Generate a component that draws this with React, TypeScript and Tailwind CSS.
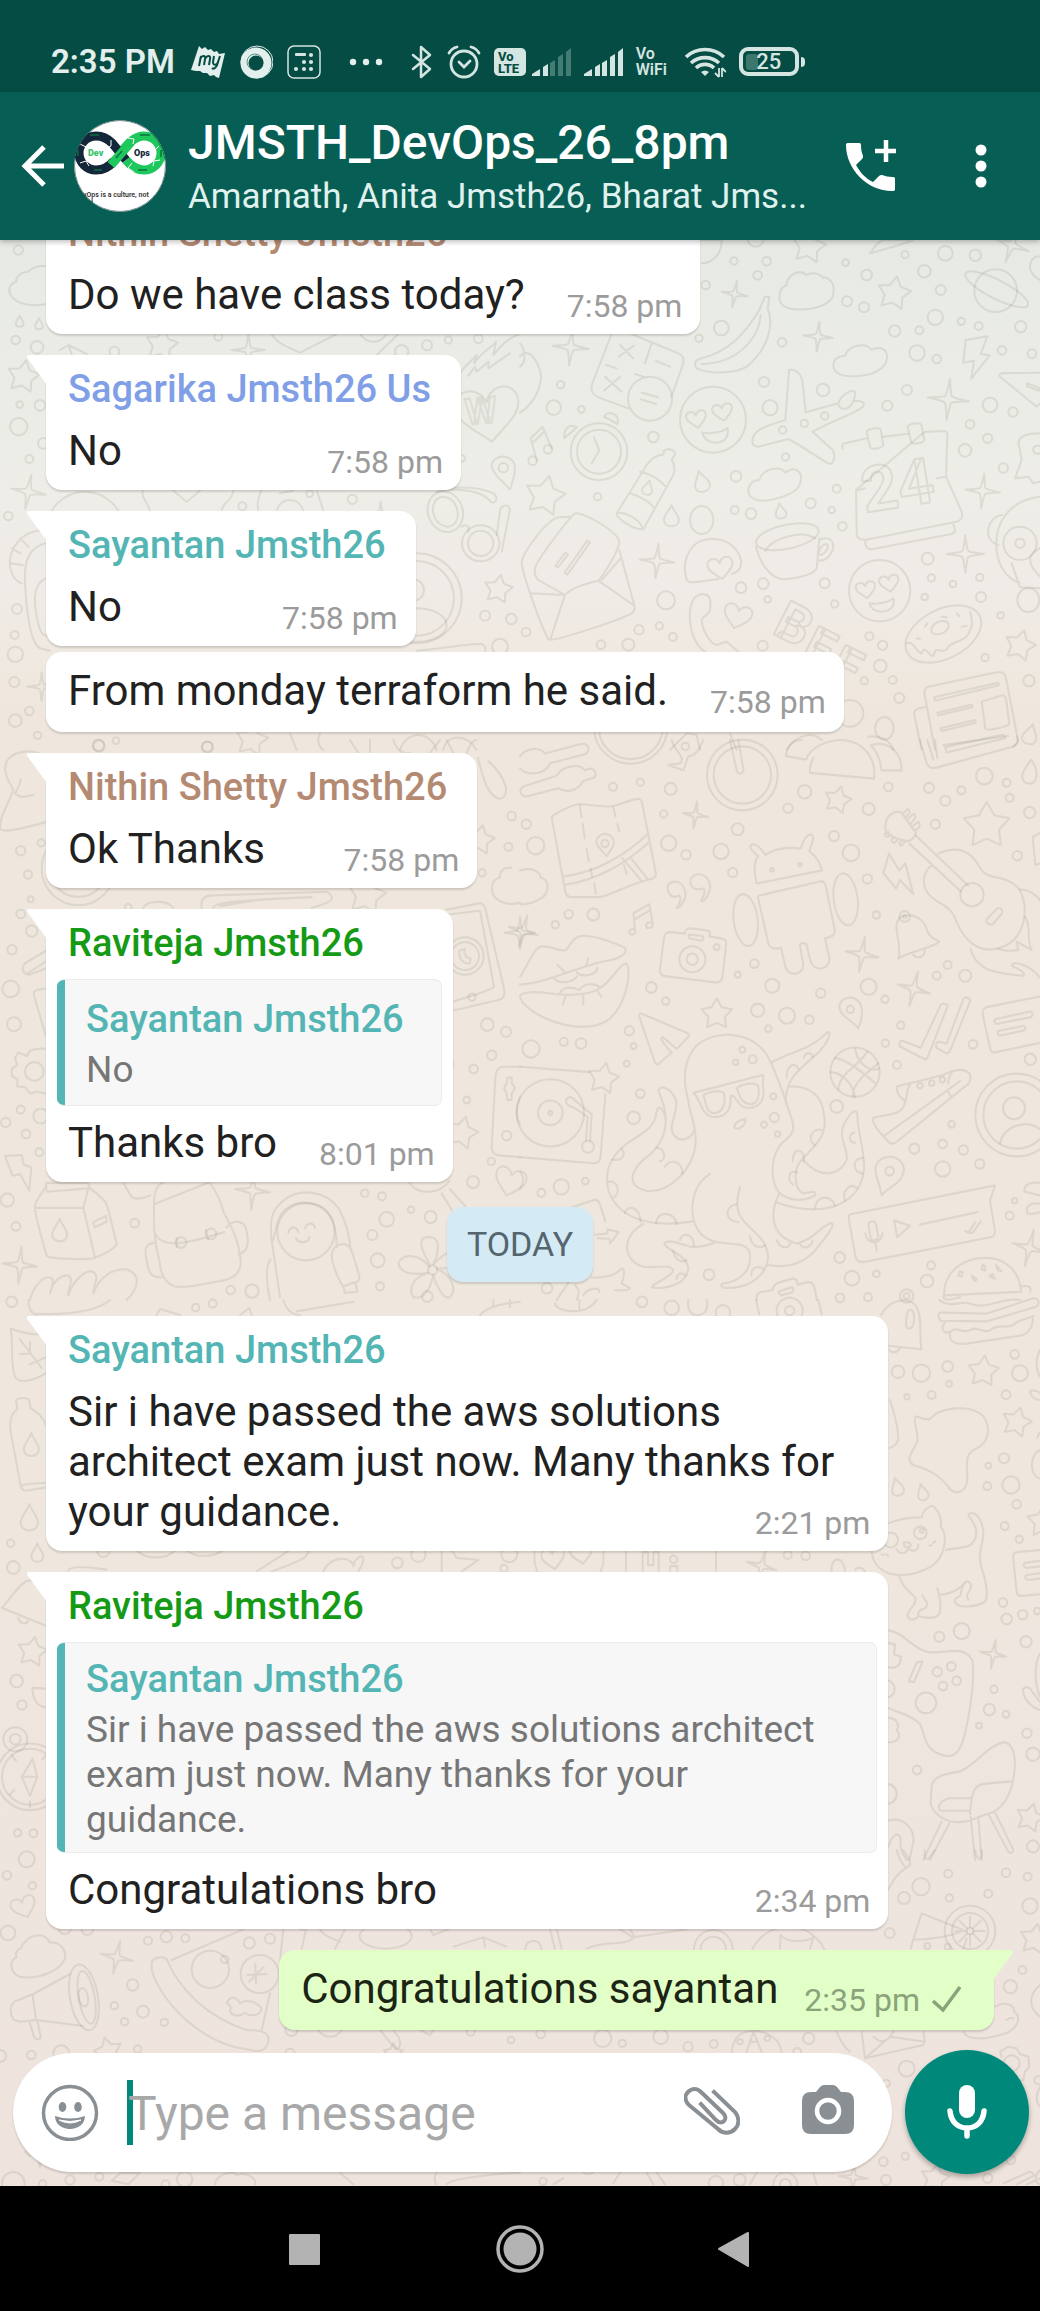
import React from "react";

/* ------------------------------------------------------------------ */
/* Wallpaper                                                           */
/* ------------------------------------------------------------------ */

type Dot = [number, number, number];
type Spin = [number, number, number, number?];

interface Patch {
  x: number;
  y: number;
  tall?: boolean;
  dots: Dot[];
  stars?: Spin[];
  sparks?: Spin[];
  hearts?: Spin[];
  drops?: Spin[];
  ovals?: [number, number, number, number, number?][];
  letters?: [string, number, number, number, number][];
  lines: string[];
}

function starPath(r: number) {
  const pts: string[] = [];
  for (let i = 0; i < 10; i++) {
    const a = (Math.PI / 5) * i - Math.PI / 2;
    const q = i % 2 === 0 ? r : r * 0.54;
    pts.push(`${(q * Math.cos(a)).toFixed(1)} ${(q * Math.sin(a)).toFixed(1)}`);
  }
  return `M${pts.join("L")}Z`;
}

function sparkPath(r: number) {
  const k = r * 0.16;
  return `M0 ${-r}Q${k * 0.6} ${-k * 1.4} ${k} ${-k}Q${k * 1.4} ${-k * 0.6} ${r} 0Q${k * 1.4} ${k * 0.6} ${k} ${k}Q${k * 0.6} ${k * 1.4} 0 ${r}Q${-k * 0.6} ${k * 1.4} ${-k} ${k}Q${-k * 1.4} ${k * 0.6} ${-r} 0Q${-k * 1.4} ${-k * 0.6} ${-k} ${-k}Q${-k * 0.6} ${-k * 1.4} 0 ${-r}Z`;
}

function heartPath(r: number) {
  return `M0 ${r * 0.85}C${-r * 0.5} ${r * 0.4} ${-r} ${r * 0.1} ${-r} ${-r * 0.35}C${-r} ${-r * 0.95} ${-r * 0.2} ${-r} 0 ${-r * 0.4}C${r * 0.2} ${-r} ${r} ${-r * 0.95} ${r} ${-r * 0.35}C${r} ${r * 0.1} ${r * 0.5} ${r * 0.4} 0 ${r * 0.85}Z`;
}

function dropPath(r: number) {
  return `M0 ${-r * 1.4}C${r * 0.3} ${-r * 0.6} ${r * 0.9} ${-r * 0.2} ${r * 0.9} ${r * 0.4}C${r * 0.9} ${r * 1.4} ${-r * 0.9} ${r * 1.4} ${-r * 0.9} ${r * 0.4}C${-r * 0.9} ${-r * 0.2} ${-r * 0.3} ${-r * 0.6} 0 ${-r * 1.4}Z`;
}

const patches: Patch[] = [
  {
    x: 520,
    y: 230,
    dots: [
      [642, 93, 11], [740, 94, 13], [713, 136, 13], [977, 98, 10], [1155, 74, 11], [1276, 70, 22], [1366, 76, 17],
      [1040, 135, 16], [1213, 124, 19], [1262, 180, 15], [981, 214, 15], [1032, 232, 15], [1246, 262, 23], [604, 294, 22],
      [786, 337, 13], [1124, 303, 17], [1198, 301, 12], [1324, 274, 11], [1376, 288, 12], [1502, 290, 17], [1191, 369, 23],
      [1250, 387, 13], [1446, 361, 13], [1536, 371, 13], [537, 325, 11], [557, 165, 13], [122, 464, 11], [101, 533, 22],
      [184, 538, 10], [732, 456, 15], [909, 480, 19], [750, 533, 23], [1161, 480, 15], [1102, 527, 15], [1410, 525, 22],
      [1479, 546, 14], [1350, 583, 13], [1403, 625, 14], [1335, 661, 19], [400, 621, 16], [797, 681, 11], [648, 739, 16],
      [950, 776, 12], [872, 820, 15], [935, 840, 10], [644, 840, 12], [693, 851, 16], [967, 889, 13], [1450, 714, 14],
      [233, 800, 11], [1223, 986, 18], [1234, 1044, 11], [1299, 1062, 10], [1379, 1042, 11], [1383, 1101, 15],
      [1214, 1101, 10], [663, 1073, 16], [730, 1061, 16], [914, 1060, 15], [743, 1108, 10], [944, 1122, 11],
      [438, 1111, 27], [357, 1199, 14], [418, 1188, 11], [459, 1221, 12], [325, 1244, 18], [243, 1244, 13], [18, 1206, 13],
      [728, 1247, 15], [1048, 1219, 12], [1088, 1246, 14], [1081, 1308, 19], [1118, 1350, 12], [1033, 1352, 11],
      [1442, 1156, 10], [1395, 1283, 11], [1138, 1404, 15], [1527, 1352, 17], [788, 600, 11], [853, 580, 11],
      [914, 558, 11], [390, 506, 66], [579, 569, 99], [1079, 1082, 92], [237, 665, 85], [237, 665, 66], [38, 692, 13],
      [84, 658, 13], [1500, 940, 50], [1500, 940, 14], [707, 26, 24], [1427, 182, 64],
    ],
    stars: [[867, 50, 52, 10], [1122, 190, 52, 10], [75, 798, 62, 12], [1500, 1247, 48, 15]],
    sparks: [[644, 192, 40, 10], [152, 352, 55, 5], [894, 320, 45, 5], [1285, 508, 62, 5], [1388, 783, 52, 5], [411, 993, 52, 5], [1336, 972, 56, 0], [1475, 45, 55, 20]],
    hearts: [[530, 568, 30, -10], [608, 547, 30, -10], [1038, 1080, 29, -10], [1108, 1061, 29, -10], [652, 1160, 42, 15], [602, 1015, 38, -10]],
    drops: [[545, 757, 25, -15], [454, 860, 25], [782, 845, 18, -10], [383, 775, 17, 15], [1530, 1515, 24, 15]],
    ovals: [[1430, 178, 105, 28, 27], [545, 870, 35, 42], [802, 920, 96, 36, -12], [1525, 1110, 33, 36], [1270, 1212, 122, 74, -27], [1260, 1193, 28, 18, -25], [1093, 1495, 28, 34], [990, 1450, 40, 40]],
    letters: [["24", 1035, 848, 190, -9], ["B", 752, 1208, 160, 27], ["F", 840, 1278, 150, 27], ["F", 920, 1335, 150, 27]],
    lines: [
      "M800 165C800 135 840 115 858 135C880 125 900 130 908 143C930 140 945 165 940 185C945 215 900 235 855 238C810 242 775 230 778 200C780 180 785 172 800 165Z",
      "M975 378C985 345 1035 335 1055 360C1080 345 1105 360 1101 385C1098 415 1060 435 1015 438C965 442 940 430 940 405C942 385 958 378 975 378Z",
      "M718 750C728 715 780 705 797 728C822 705 850 725 842 755C838 785 800 800 750 810C705 818 680 800 686 775C690 758 702 750 718 750Z",
      "M735 200L748 200L743 235C765 290 740 360 680 410C640 435 560 430 530 415C520 400 525 390 545 385C620 365 670 320 718 240ZM722 255C715 330 650 400 545 402",
      "M1337 330L1402 319L1382 372L1409 376L1354 446L1362 392L1330 398Z",
      "M1560 428L1445 430C1436 432 1438 438 1442 442L1550 530L1560 520M1522 460L1560 475L1556 482L1520 468Z",
      "M275 312L215 465C212 485 218 495 235 502L325 535M455 498L490 400C492 385 490 378 475 370L335 312M300 345L340 385M342 347L296 380M408 393L450 410M255 440L305 485M300 440L252 482M258 405L290 415M345 432L370 440M395 340L375 400M366 488L414 502M362 508L408 522",
      "M807 420C825 415 845 430 848 460L857 547L955 520C965 490 1000 475 1005 485C1008 495 1000 510 1000 514C1025 510 1035 518 1030 528C1020 545 940 570 878 605L938 660C948 680 940 700 930 702C910 695 850 650 805 627L715 650C695 650 695 635 700 620C710 595 750 585 796 570ZM955 520C955 545 990 540 1000 514",
      "M547 607C570 615 610 605 622 594C630 620 610 638 588 638C565 638 550 625 547 607ZM1048 1120C1070 1125 1110 1115 1120 1105C1128 1130 1105 1145 1085 1145C1065 1145 1052 1135 1048 1120Z",
      "M968 655C965 645 968 641 975 640L1040 625M1088 620L1163 612M1213 606L1272 603C1280 603 1282 608 1282 615L1278 740L1325 845C1330 860 1325 870 1310 875L1035 930C1020 930 1010 925 1010 910L1008 780ZM1008 782L1035 775M1250 745L1278 740M1035 930C1035 950 1040 958 1055 958L1295 912C1308 908 1308 900 1298 878",
      "M1040 605C1042 597 1078 590 1082 598L1090 645C1086 655 1056 660 1050 652ZM1163 590C1166 580 1200 576 1204 584L1213 630C1210 640 1180 644 1174 638Z",
      "M222 622L238 662L215 700M133 625C130 595 150 580 170 592ZM252 560C265 540 300 550 293 582Z",
      "M50 690L32 625L68 590L95 655M36 640L72 606",
      "M370 898L460 735C468 715 462 700 455 688L466 672C460 655 440 655 432 662L430 674C405 675 390 690 380 705L290 850C285 862 340 900 370 898ZM360 725C390 730 420 750 435 768M328 790C355 797 390 815 403 835M290 850C320 845 360 870 370 898",
      "M500 1050C480 980 520 925 575 927C640 925 670 980 662 1010C655 1030 640 1028 635 1032M500 1050C505 1062 530 1055 595 1047",
      "M708 950C720 1000 750 1045 790 1048C830 1045 880 1035 890 1015L898 925M898 930C930 915 945 935 938 960C925 990 905 995 893 990M900 955C915 935 928 940 922 958C912 975 900 978 896 970ZM735 963C760 920 850 900 885 925",
      "M1447 855C1400 860 1385 930 1435 945M1560 800C1470 810 1420 880 1430 960C1435 1010 1460 1045 1498 1058M1475 1000L1500 1072L1560 1075M1560 955C1520 970 1520 1000 1560 1040",
      "M5 1000C5 970 80 870 115 862L148 860M45 1015C50 990 150 860 165 850C185 845 290 900 298 935C298 960 250 1035 235 1052C200 1060 150 1075 135 1095L55 1050C45 1040 42 1030 45 1015ZM5 1000C10 1040 60 1180 85 1228C95 1238 300 1170 335 1150C348 1140 345 1130 340 1115L298 960M30 1090L135 1095L92 1225M235 1052L340 1125M245 1050L302 985",
      "M106 1008L136 968L144 974L114 1012ZM134 1028L202 932L210 938L142 1034Z",
      "M510 1170C505 1110 530 1085 560 1095C575 1100 572 1125 570 1140C565 1160 545 1155 545 1175C550 1205 570 1240 590 1245L620 1235L655 1265M510 1170C512 1210 530 1250 555 1265",
      "M1160 1240C1180 1230 1190 1270 1205 1270C1215 1240 1225 1280 1240 1278C1250 1240 1260 1275 1280 1258C1290 1230 1340 1240 1350 1200C1360 1190 1355 1160 1350 1145M1215 1190L1222 1180M1190 1225L1200 1227M1265 1160L1280 1162M1310 1150L1318 1158M1325 1190L1340 1188",
      "M1215 1400C1210 1380 1215 1375 1225 1370L1430 1327C1450 1325 1455 1330 1458 1345L1492 1520C1495 1535 1490 1540 1480 1550M1215 1400L1245 1560M1215 1432C1190 1435 1180 1440 1183 1455L1205 1560M1385 1415L1445 1396C1452 1396 1456 1400 1458 1408L1468 1480C1468 1490 1400 1505 1396 1495ZM1242 1402L1435 1358L1437 1366L1245 1412ZM1252 1448L1355 1424L1357 1432L1255 1456ZM1262 1495L1365 1470L1367 1478L1265 1503ZM1270 1545L1465 1518",
      "M0 380C30 340 70 420 62 450C58 490 30 530 0 548M0 340C15 355 20 400 0 410M545 30L605 30C605 75 575 100 545 100M1050 70C1070 40 1080 32 1090 30L1180 30C1130 50 1080 60 1050 70Z",
      "M1560 610C1500 610 1490 630 1498 650L1505 690L1485 745L1525 740L1540 760L1560 755M1560 648C1530 640 1535 680 1560 670",
      "M800 1560C830 1510 880 1505 905 1530M1045 1520C1080 1515 1110 1530 1120 1560M630 1510L650 1560M450 1560L500 1510L530 1515L540 1560",
      "M1560 80C1525 75 1515 130 1560 150",
    ],
  },
  {
    x: 0,
    y: 230,
    dots: [
      [55, 60, 14], [47, 330, 13], [111, 352, 19], [59, 524, 10], [120, 526, 16], [56, 590, 26], [88, 687, 12], [25, 858, 13],
      [51, 1137, 15], [44, 1215, 12], [46, 1273, 23], [43, 1356, 15], [88, 1443, 13], [46, 1472, 19], [113, 1516, 11],
      [343, 365, 15], [1057, 808, 14], [929, 791, 10], [727, 829, 12], [1281, 346, 15], [1345, 330, 11], [1435, 326, 13],
      [1455, 1157, 15], [1534, 1167, 16], [1500, 1250, 24], [1385, 685, 10], [655, 320, 12], [622, 1550, 15],
      [297, 1548, 17], [348, 1532, 10], [1510, 713, 14], [1250, 1105, 135], [1250, 1105, 112], [1240, 1080, 32],
      [870, 850, 40], [1120, 290, 45], [1205, 365, 20], [255, 900, 115], [130, 640, 16],
    ],
    stars: [[70, 440, 50, 10], [485, 345, 50, 10], [1495, 1078, 44, 10], [755, 1530, 50, 10]],
    sparks: [[85, 785, 52, 10], [745, 360, 50], [125, 1370, 42], [1142, 850, 35]],
    hearts: [[1465, 555, 95, -8], [560, 765, 60]],
    drops: [[59, 275, 13], [117, 283, 13]],
    ovals: [[1336, 845, 52, 62, -20], [1336, 845, 36, 46, -20], [1442, 940, 56, 54], [1442, 940, 38, 38], [1250, 1185, 90, 50]],
    letters: [["W", 1398, 585, 110, -5]],
    lines: [
      "M138 108C100 105 90 120 85 125C55 125 45 150 50 155C25 160 25 185 32 195C50 225 100 230 138 222",
      "M1530 778C1510 755 1475 730 1475 705C1480 670 1545 670 1545 715C1545 740 1535 760 1530 778Z",
      "M1385 890C1400 880 1410 890 1405 905M1310 785C1380 770 1450 785 1472 815C1490 825 1495 800 1480 790C1440 770 1380 770 1330 776M1505 965L1530 838C1525 820 1500 825 1500 845L1490 915",
      "M138 900C60 900 25 960 30 1010C35 1040 50 1055 65 1060M138 940C90 950 70 990 75 1060M75 1060C80 1150 90 1240 120 1255L150 1262M138 1045C100 1060 100 1110 110 1160C118 1200 125 1215 140 1218M35 955L62 970M60 925L85 950M30 1000L68 1005",
      "M815 312C830 340 860 350 900 368L1010 312M1195 312L1130 375M180 360L205 345L260 372M205 345L215 372M1380 430C1400 400 1425 385 1430 375L1422 400C1450 360 1485 345 1488 335L1480 375C1510 340 1530 320 1560 312M1405 437L1425 410L1430 425L1465 395L1465 415L1530 370",
      "M430 780C420 800 440 810 450 842M700 780C695 820 670 810 665 842M775 842C770 820 775 800 785 780M950 780L970 842M840 790L880 782",
      "M1250 1262C1300 1260 1400 1240 1445 1242C1455 1245 1458 1255 1455 1265M870 1510L890 1560M960 1510C950 1530 955 1550 970 1560M1200 1560C1220 1500 1290 1500 1310 1560M1330 1560C1340 1510 1400 1510 1430 1560",
    ],
  },
  {
    x: 520,
    y: 740,
    tall: true,
    dots: [
      [279, 131, 12], [361, 118, 11], [452, 137, 18], [431, 207, 11], [804, 191, 14], [854, 145, 20], [1046, 193, 18],
      [1105, 131, 13], [1227, 134, 15], [1276, 170, 15], [1324, 141, 12], [1393, 101, 25], [1460, 120, 12], [1469, 162, 12],
      [1529, 203, 17], [19, 236, 14], [47, 296, 26], [446, 289, 23], [498, 321, 14], [603, 312, 23], [653, 250, 18],
      [638, 371, 14], [942, 269, 15], [993, 316, 25], [1042, 389, 14], [1246, 236, 14], [1492, 324, 14], [146, 488, 13],
      [106, 517, 11], [220, 489, 18], [1069, 490, 11], [703, 626, 13], [653, 657, 9], [757, 688, 21], [902, 709, 14],
      [1046, 691, 24], [1095, 726, 11], [1283, 630, 12], [1250, 660, 12], [1336, 660, 18], [394, 693, 16], [437, 731, 11],
      [713, 757, 20], [801, 772, 24], [868, 783, 13], [745, 808, 10], [1142, 799, 11], [1096, 849, 11], [1359, 852, 13],
      [1531, 894, 17], [1131, 910, 12], [328, 814, 14], [341, 857, 9], [131, 845, 12], [183, 850, 16], [33, 865, 26],
      [320, 906, 9], [361, 990, 13], [341, 1058, 19], [950, 1026, 19], [1295, 1076, 10], [1183, 1144, 15],
      [1268, 1131, 13], [1330, 1148, 14], [1379, 1187, 14], [1268, 1201, 23], [124, 1251, 23], [196, 1235, 10],
      [64, 1268, 12], [1484, 1290, 8], [1469, 1332, 12], [959, 1449, 16], [996, 1507, 22], [1069, 1495, 10],
      [1233, 1471, 12], [1221, 1515, 19], [567, 1497, 16], [81, 1535, 16], [1160, 1557, 20], [1160, 1557, 9],
      [960, 1562, 13], [1044, 1560, 12], [255, 290, 11], [590, 580, 9], [517, 614, 39], [517, 614, 17], [1356, 433, 35],
      [667, 867, 9], [698, 894, 12], [647, 902, 8], [760, 998, 9], [763, 1057, 14], [732, 1077, 9], [773, 1103, 8],
      [1482, 1031, 33], [91, 1044, 37], [91, 1044, 6], [91, 1044, 101], [204, 1139, 18], [1005, 930, 74], [991, 754, 11],
      [1109, 1207, 13], [1200, 968, 8], [1235, 961, 8], [1267, 951, 8], [667, 98, 106], [667, 98, 86], [332, -36, 110],
      [332, -36, 96], [756, 363, 5], [840, 349, 5], [1154, 494, 16], [1154, 494, 5], [496, 18, 11],
    ],
    stars: [[953, 168, 42, 15], [1400, 240, 72], [590, 768, 48, 0], [250, 948, 48, 10]],
    sparks: [[526, 210, 38, 8], [10, 535, 45, 15], [1026, 600, 50, 10], [1181, 697, 50, 15], [1528, 1422, 52, 15]],
    ovals: [[1490, 1050, 124, 116], [1490, 1050, 100, 94], [677, 504, 36, 73, -8], [977, 446, 36, 73, -8]],
    lines: [
      "M0 45C20 20 60 20 75 38L180 12C205 5 215 30 195 40L90 65C75 100 20 100 0 80M10 130L110 100C130 70 180 65 195 85C220 70 235 95 222 105L190 115C170 150 130 145 115 135L20 158C0 158 -5 140 10 130Z",
      "M95 218C95 208 160 180 178 180C210 180 260 190 280 185C300 180 340 165 355 165C362 165 365 170 367 180L408 375C408 385 400 388 390 390C340 400 280 430 240 440L155 440C145 440 138 435 136 425ZM133 382C230 370 320 320 383 263M138 405C230 392 320 345 388 285M306 330L365 395M330 328L382 388",
      "M180 182L184 215M188 235L194 275M200 305L206 340M212 360L216 382M222 400L228 430M280 188L286 215M292 235L298 255M312 350L320 375",
      "M260 325C240 305 229 295 229 285C232 255 280 255 282 288C282 300 270 310 260 325Z",
      "M630 0L650 85C655 100 672 95 670 80L655 0M455 0C462 30 500 50 480 65L445 70L490 85L505 45C530 45 540 20 550 0",
      "M798 45C800 15 820 0 845 0M798 45L858 55C870 20 920 0 970 0C1030 5 1070 50 1062 108L870 92C868 80 872 65 880 50M1052 15C1100 0 1145 30 1145 85L1085 85C1080 50 1070 30 1052 15Z",
      "M1200 0L1220 65C1225 80 1240 80 1255 76L1480 18C1495 12 1498 0 1490 -10M1222 0L1240 55M1245 0L1252 50M1275 20L1450 -15L1455 -5L1280 35Z",
      "M1533 55C1560 90 1550 120 1530 122C1510 122 1500 105 1512 85Z",
      "M1097 235C1100 205 1140 190 1150 210L1188 260C1185 275 1165 290 1150 280C1120 275 1090 265 1097 235ZM1150 205L1160 195C1168 192 1172 200 1166 206L1160 214M1165 220L1178 208C1186 206 1190 214 1184 220L1174 232M1180 240L1192 230C1200 230 1202 240 1196 246L1186 252M1106 258L1094 262C1092 268 1098 272 1104 270L1114 266M1124 272L1114 280C1114 288 1122 290 1128 284L1134 278M1145 282L1138 290C1140 298 1150 296 1154 284",
      "M1188 268L1345 408M1168 290L1322 424M1255 318C1310 295 1350 310 1375 350C1400 400 1450 370 1495 415C1530 460 1520 560 1440 582C1380 600 1335 565 1310 510C1290 450 1240 465 1215 415C1205 385 1220 360 1235 352M1402 500L1432 472C1445 468 1450 480 1444 488L1418 516C1405 520 1395 510 1402 500Z",
      "M1500 418C1530 420 1550 435 1560 450M1515 495C1535 520 1518 560 1535 588L1490 565L1495 588C1470 592 1450 590 1435 585M1352 585C1370 650 1440 655 1510 660C1520 650 1490 640 1475 632C1480 615 1530 630 1560 665",
      "M1107 318L1138 365L1156 345L1180 432L1140 392L1128 416L1090 372Z",
      "M710 402C698 360 705 335 715 325C695 310 685 300 695 292C710 290 725 305 736 322C770 300 810 300 842 304C850 280 862 262 875 265C888 272 872 295 868 312C890 325 900 345 906 365ZM716 436L900 396C912 394 915 400 917 408L944 530C946 545 940 550 915 555L928 610C932 645 880 650 872 620L860 575C860 565 840 568 840 575L850 630C850 660 800 665 795 630L783 582C760 588 750 582 745 570L715 445C714 440 712 438 716 436Z",
      "M470 470C490 440 480 430 465 440C440 435 435 405 455 398C490 390 510 430 485 460C480 468 475 472 470 470ZM543 450C560 425 555 410 540 418C510 420 500 390 525 378C560 368 585 405 560 440C555 448 548 452 543 450Z",
      "M345 530L340 485L388 460L398 515M344 502L390 477M345 530C350 545 330 550 328 540C328 530 338 528 345 530ZM398 515C400 528 380 530 378 520C380 510 392 508 398 515Z",
      "M432 555C436 540 440 538 452 538L495 542C496 530 500 527 510 527L560 533C570 535 572 540 568 550L605 556C618 558 620 564 618 575L608 660C605 678 595 680 580 678L440 662C420 660 418 650 420 640ZM508 545L545 548C555 555 550 562 542 562L510 556C504 552 504 548 508 545Z",
      "M1135 612C1150 570 1110 520 1142 495C1190 480 1215 510 1222 535C1228 550 1240 555 1258 565C1230 585 1170 590 1135 612ZM1180 600C1190 615 1215 608 1214 590",
      "M0 662C20 640 40 580 65 578C90 575 120 595 138 588C150 575 160 548 190 548C230 548 290 570 315 582C325 600 290 615 260 618C170 635 80 680 0 685M0 720C0 705 40 705 70 707C120 715 200 720 240 695C280 670 300 625 318 625C335 640 325 730 270 780C200 830 60 790 8 735ZM112 630L135 650M205 612L198 635M102 665C110 685 160 680 170 662M170 650C180 665 230 660 232 638M120 710C125 690 160 690 178 700C190 680 225 680 240 692M138 715L128 740M190 715L190 740M230 700L244 718",
      "M362 765L500 820C508 824 508 828 504 832L470 865L428 832C420 835 425 845 455 875L415 908C408 910 405 905 402 895L358 775C358 768 360 765 362 765Z",
      "M1015 808C1000 785 958 775 958 745C965 710 1020 715 1025 750C1030 775 1020 790 1015 808ZM1085 1275C1080 1245 1065 1220 1066 1200C1072 1155 1150 1155 1152 1205C1145 1245 1105 1250 1085 1275Z",
      "M1148 842L1202 862L1262 742C1270 735 1285 740 1282 748L1222 890C1218 896 1215 896 1210 892L1140 858C1135 850 1142 840 1148 842ZM1258 845L1280 850L1330 725C1335 718 1352 722 1350 732L1290 870C1286 878 1280 878 1274 875L1250 862C1245 852 1250 845 1258 845Z",
      "M1560 718L1400 748C1388 752 1386 758 1388 768L1410 862C1412 874 1418 876 1428 874L1560 848M1425 782L1530 760C1540 762 1540 772 1532 776L1430 795C1422 792 1422 785 1425 782ZM1435 815L1510 800C1518 802 1518 810 1512 813L1440 828C1432 826 1432 820 1435 815Z",
      "M0 915L210 930M256 992L242 1165C240 1180 235 1186 220 1185L0 1168M138 1008C145 995 160 1000 165 1010L215 1048L210 1122M138 1012C140 1025 150 1025 160 1028L203 1055L198 1122",
      "M505 1010C490 960 485 900 530 855C590 810 690 815 740 880C780 950 800 1020 818 1070C825 1100 810 1110 790 1125C750 1160 750 1230 775 1265C800 1290 850 1295 885 1275C890 1265 880 1262 850 1270C820 1255 820 1200 845 1175C880 1140 925 1110 912 1050C905 985 860 968 803 970M752 905C800 875 870 870 920 820C935 810 930 840 900 870C860 910 790 940 798 1020M505 1010C510 1050 530 1080 527 1130C520 1200 450 1270 380 1262C320 1250 330 1210 370 1175C410 1150 440 1110 437 1060C430 1030 415 1020 410 1040C405 1080 380 1095 345 1115C280 1150 250 1200 265 1260C290 1330 370 1370 520 1348M522 1095C510 1120 475 1130 458 1100C445 1080 475 1040 468 1010C460 985 430 960 415 980C420 1000 435 1015 437 1060M852 1178C900 1230 960 1220 980 1175C985 1140 955 1120 970 1080C985 1050 1005 1030 1012 1045C1010 1090 1035 1150 1032 1200C1025 1290 930 1345 768 1295M778 1270C745 1330 755 1390 830 1410C890 1395 900 1360 935 1352C950 1360 900 1410 885 1430C850 1465 800 1480 740 1470M570 1215C510 1250 500 1340 545 1385C600 1430 680 1390 690 1440C695 1500 640 1520 608 1522C590 1535 630 1540 680 1525C740 1500 760 1450 730 1405C690 1350 630 1350 660 1252M370 1355C300 1390 310 1460 370 1475C420 1480 450 1465 460 1485C455 1505 400 1520 395 1532C420 1540 500 1530 505 1480C500 1440 440 1430 433 1410C440 1395 480 1410 515 1420C550 1420 580 1410 590 1405",
      "M520 988L728 938C735 950 725 960 730 975C738 1025 690 1040 665 1025C645 1010 640 985 632 1000C635 1040 610 1060 575 1055C540 1045 545 1010 520 988ZM550 995C575 980 610 982 612 990C620 1030 600 1045 580 1045C555 1040 560 1015 550 995ZM650 975C675 958 710 960 714 968C722 1000 710 1020 690 1020C660 1015 660 995 650 975ZM643 1085C640 1075 660 1065 676 1060C678 1080 655 1095 643 1085Z",
      "M278 1175C305 1180 320 1160 305 1145M265 1237C290 1230 305 1265 282 1280M315 1325C320 1300 360 1305 362 1350M408 1355C410 1315 465 1320 470 1355M408 1142C435 1140 440 1175 420 1180M435 1195C450 1170 490 1180 487 1215M800 945C800 910 825 900 835 920M852 890C855 870 880 875 878 888M905 1092C875 1085 860 1120 885 1135M850 1180C860 1150 820 1130 818 1180M830 1210C805 1200 800 1235 820 1245M1003 1100C985 1100 985 1130 1005 1128M1030 1170C995 1170 995 1210 1028 1214M1010 1255C990 1235 965 1265 975 1290M885 1310C890 1270 940 1275 945 1305M770 1400C780 1425 805 1425 810 1410M840 1412C850 1425 870 1425 878 1402M650 1300C615 1305 610 1345 655 1350M690 1390C695 1420 720 1425 735 1415M460 1430C465 1460 490 1465 500 1455M480 1400C490 1375 520 1385 522 1415M695 1500C690 1475 720 1470 730 1482M470 1510C470 1490 490 1490 496 1500",
      "M932 930C960 930 1000 960 1005 1000M945 890C990 895 1050 950 1065 960M1005 865C1015 910 1050 930 1078 920M1042 872C1010 920 960 930 955 978M1075 905C1030 940 1000 960 998 998",
      "M1130 970L1270 938C1300 925 1330 915 1350 935C1355 955 1345 965 1335 970L1130 1125C1120 1132 1112 1132 1105 1125C1080 1100 1060 1080 1058 1060C1070 1050 1120 1055 1145 1035C1165 1010 1155 985 1170 965M1130 970C1130 985 1140 1000 1152 1008M1093 1108L1320 955M1285 985L1295 1002M1285 962C1285 945 1290 938 1295 932",
      "M1440 1130C1450 1080 1520 1060 1560 1090",
      "M992 1328L1425 1247L1410 1290L1425 1375C1425 1388 1420 1392 1408 1393L1030 1462C1015 1462 1010 1458 1006 1445L987 1345C985 1335 987 1330 992 1328ZM1200 1357L1372 1322M1122 1345L1170 1360L1132 1392ZM1045 1355C1050 1345 1066 1345 1068 1355L1075 1390C1075 1402 1055 1405 1052 1395ZM1036 1382C1040 1415 1085 1415 1088 1380M1066 1408L1070 1430M1335 1375L1345 1380L1365 1350M1350 1380L1358 1380L1382 1348",
      "M1560 1240C1530 1235 1505 1250 1515 1265L1560 1275M1560 1298C1530 1295 1515 1305 1522 1325C1535 1330 1550 1325 1560 1322",
      "M1272 1555C1270 1490 1330 1450 1395 1450C1460 1450 1500 1490 1503 1545L1272 1555C1265 1575 1300 1565 1320 1560M1503 1530C1530 1525 1535 1535 1530 1545M1315 1500L1320 1488L1328 1490L1325 1502ZM1355 1500C1360 1515 1368 1518 1370 1508ZM1385 1482L1388 1470L1396 1474L1395 1486ZM1428 1470L1445 1488L1432 1484ZM1408 1502L1418 1495L1424 1508Z",
      "M150 1310L225 1287C235 1287 235 1292 240 1300L256 1348M225 1385L262 1382L262 1370L296 1378L270 1410L268 1396L232 1395M215 1505C260 1505 285 1500 305 1480C318 1480 310 1510 305 1522L330 1535C320 1545 300 1540 285 1540M110 1568L145 1520M165 1525C180 1540 178 1550 170 1568M190 1555C200 1535 240 1530 238 1545",
      "M710 1568C710 1550 715 1545 730 1545L758 1540C760 1525 770 1520 780 1518L820 1508C830 1508 832 1515 832 1525L865 1518C880 1518 885 1530 890 1568M775 1545L815 1532C825 1538 820 1545 812 1548L782 1555Z",
      "M1560 260L1538 272L1546 350L1560 346M0 365C40 355 60 370 62 385C90 390 90 430 60 445C40 458 20 460 0 460",
      "M0 1210C12 1220 12 1240 0 1255",
    ],
  },
  {
    x: 0,
    y: 740,
    tall: true,
    dots: [
      [62, 310, 14], [124, 288, 11], [84, 377, 12], [92, 446, 9], [62, 487, 13], [95, 535, 17], [36, 587, 14], [32, 697, 25],
      [42, 796, 21], [62, 1035, 12], [17, 1071, 14], [78, 1103, 13], [118, 1154, 12], [122, 1053, 22], [22, 1288, 20],
      [48, 1362, 13], [404, 1353, 13], [1094, 1269, 11], [1146, 1278, 12], [1233, 1315, 10], [1292, 1336, 18],
      [1160, 1342, 22], [1117, 1386, 15], [1133, 1457, 21], [1140, 1530, 12], [756, 1543, 20], [692, 1540, 13],
      [622, 20, 17], [295, 15, 17], [1535, 213, 13], [1525, 299, 12], [1446, 372, 11], [1416, 720, 11], [1462, 797, 19],
      [1518, 817, 15], [1475, 883, 14], [1421, 921, 13], [1400, 1008, 10], [1520, 1108, 14], [1474, 1180, 11],
      [1419, 1238, 18], [103, 928, 28], [918, 1377, 86], [1298, 1484, 14], [543, 1407, 16], [633, 1383, 16], [235, 360, 110],
      [235, 360, 85], [1395, 605, 42], [1395, 605, 56], [385, 468, 10],
    ],
    stars: [[1440, 280, 45, 10], [1385, 1100, 50, 15], [1100, 435, 60, 10]],
    sparks: [[758, 1262, 52, 5], [60, 1470, 52, 5], [1560, 540, 45]],
    hearts: [[1530, 1238, 46, 15]],
    drops: [[179, 1375, 25]],
    lines: [
      "M138 50C100 20 40 30 20 60C5 90 30 120 40 140C20 190 0 210 0 250C10 260 60 250 138 230M62 110C60 130 50 140 45 150C70 170 90 150 100 155",
      "M105 1310L250 1310L285 1450C280 1455 160 1455 140 1445C120 1380 105 1330 105 1310ZM105 1310C100 1290 135 1265 138 1245M250 1310L265 1255M265 1250C280 1265 318 1285 322 1305L350 1410C348 1425 300 1445 285 1450M138 1240L265 1240L268 1255L140 1265ZM280 1350L318 1333L320 1348L284 1365Z",
      "M462 1300C460 1270 470 1245 490 1238M628 1238C650 1265 665 1300 672 1325C700 1370 720 1420 722 1460C725 1490 700 1510 660 1515C610 1525 550 1535 525 1530C490 1520 480 1490 478 1455C460 1400 462 1350 462 1300ZM462 1375C480 1420 530 1420 672 1378M680 1365C700 1340 735 1345 740 1375C745 1400 750 1430 715 1440M462 1408C435 1410 432 1430 440 1455C445 1490 450 1505 485 1505M370 1240L395 1280C410 1290 440 1280 450 1275M530 1395L530 1420M618 1372L624 1398",
      "M815 1400C810 1350 810 1320 850 1290C900 1250 980 1265 1015 1310C1040 1350 1050 1400 1052 1430M820 1400L830 1360C840 1310 890 1285 945 1300C990 1310 1010 1350 1010 1420M865 1380C870 1360 890 1362 895 1378M915 1368C920 1350 940 1350 945 1366M888 1395C895 1410 925 1410 928 1392M995 1440C1000 1410 1040 1400 1055 1430L1078 1500C1080 1515 1070 1520 1060 1520L1030 1530C1020 1520 995 1470 995 1440ZM1030 1530L1035 1548L1072 1545L1066 1520M815 1400L840 1560M812 1455C795 1470 800 1530 810 1568",
      "M1290 1470C1260 1420 1250 1390 1290 1392C1330 1395 1310 1450 1300 1468C1340 1430 1370 1420 1380 1440C1380 1480 1340 1480 1308 1480C1360 1500 1370 1540 1350 1560C1330 1570 1305 1520 1300 1498C1290 1540 1270 1568 1240 1560C1220 1530 1250 1500 1285 1492C1230 1500 1200 1490 1195 1465C1210 1435 1260 1440 1288 1475",
      "M90 1568C100 1530 130 1500 150 1505C170 1510 150 1540 150 1550C160 1510 190 1495 205 1500C225 1510 200 1540 205 1555C220 1510 260 1480 280 1490C300 1500 280 1530 280 1550C300 1500 340 1480 380 1482C430 1500 410 1540 380 1568",
      "M15 1165L65 1162L72 1190L94 1196L88 1262L60 1215L38 1220Z",
      "M138 620L80 655C65 650 65 635 75 625L138 590M138 640L85 658",
      "M138 695L110 700C100 702 100 712 104 722L138 830M138 865C110 862 95 868 90 870L80 885L55 875L45 890L52 910L35 920L35 940L52 950L52 970L75 972L90 990L110 985L138 990",
      "M605 470C600 440 620 435 640 435L980 425C1005 440 1000 450 970 460L935 470M640 470C640 455 700 450 935 440M660 465L760 450M430 470C440 450 500 445 520 470",
      "M1434 458L1340 475M1348 760L1495 728C1515 725 1515 710 1512 695L1455 470C1450 458 1445 456 1434 458M1440 478L1482 690C1480 700 1350 735 1348 735M1330 490L1440 478M1378 590C1375 610 1390 630 1410 625L1412 612L1400 608L1392 595L1395 585Z",
      "M1560 915L1505 915C1490 920 1488 930 1486 945L1475 1140C1475 1160 1490 1165 1520 1165L1560 1168M1522 945L1535 945L1535 960L1545 975L1535 990L1535 1008L1522 1008L1520 990L1512 975L1520 962ZM1560 1000C1545 1030 1548 1060 1560 1075",
      "M1225 1235C1250 1280 1320 1270 1348 1235M1325 1270L1365 1330M1350 1258L1400 1310",
      "M1534 358C1500 355 1498 380 1500 385C1470 390 1470 430 1490 445C1510 460 1540 462 1560 455M1350 870C1365 900 1360 930 1348 950M1434 50C1450 110 1460 140 1480 155C1500 175 1520 160 1518 135C1510 100 1480 70 1465 60M1180 0C1190 30 1210 40 1230 36M1290 36L1320 0M1360 36L1340 0M1400 36C1410 10 1420 0 1430 0M1050 0L1075 36M1110 0L1110 36",
    ],
  },
  {
    x: 0,
    y: 1300,
    tall: true,
    dots: [
      [35, 5, 16], [587, 21, 11], [638, 10, 12], [1282, -10, 16], [32, 681, 11], [40, 749, 19], [50, 1067, 19], [66, 1134, 14],
      [53, 1492, 11], [100, 1493, 12], [46, 1230, 36], [46, 1230, 16], [90, 1335, 100], [90, 1335, 84],
      [1192, 736, 16], [1255, 713, 22], [1528, 712, 24], [1512, 752, 11], [310, 703, 18],
    ],
    stars: [[97, 985, 46, 10]],
    drops: [[94, 408, 25], [88, 612, 29], [112, 710, 20]],
    lines: [
      "M138 95C100 100 60 90 32 80C40 120 30 180 45 215C60 240 110 220 138 205M58 108L125 190M90 150L90 118M90 150L60 152M110 172L138 160M110 172L88 180",
      "M52 305L48 282C55 272 85 272 88 282L92 303C115 315 130 330 138 350M52 305C30 320 28 350 32 370L62 520C65 535 75 535 90 532L138 525M66 520C80 512 110 515 138 512",
      "M5 862C30 840 60 790 85 785C110 785 130 805 138 820M5 862L138 912M55 890C60 910 80 908 85 898",
      "M138 1088L98 1086C95 1110 110 1140 138 1140M65 1335L98 1285L112 1335L90 1388ZM65 1335L112 1335M35 1275L48 1290M30 1385L42 1372M90 1420L90 1405M138 1275L128 1285",
      "M85 0C85 30 100 40 110 42M110 38C160 42 280 40 330 0M470 42L480 25L540 42M720 42L748 22L755 42M850 0C860 30 880 42 900 42M890 32L1060 5M1480 0L1480 20M1530 0L1530 20M1440 42C1460 20 1500 10 1560 5",
      "M205 758C210 745 250 745 320 755M410 700C430 725 500 730 525 700M560 700C590 725 640 720 670 700M770 760L870 700M815 760C860 745 900 730 915 720L930 700M970 760C990 720 1040 715 1060 740M1060 745C1065 720 1090 710 1090 725C1090 740 1080 750 1075 760M1325 700L1325 760M1355 700L1370 722L1435 728L1385 760",
    ],
  },
  {
    x: 520,
    y: 1300,
    tall: true,
    dots: [
      [366, 5, 16], [455, 22, 22], [609, 35, 22], [809, 30, 39], [809, 30, 14], [1484, 152, 13], [1283, 186, 16],
      [1204, 205, 26], [1134, 201, 19], [1287, 235, 9], [1235, 266, 12], [1161, 271, 8], [1500, 205, 24], [1458, 265, 13],
      [1452, 443, 15], [1405, 464, 9], [1402, 521, 12], [1473, 518, 26], [1490, 572, 13], [1454, 633, 12], [1498, 670, 11],
      [803, 714, 12], [857, 716, 13], [1449, 847, 13], [1460, 893, 16], [1508, 881, 14], [1552, 871, 10], [1325, 927, 24],
      [1258, 943, 15], [1518, 957, 17], [1422, 1090, 11], [1408, 1147, 17], [1458, 1160, 10], [1377, 1192, 9],
      [1521, 1213, 14], [1539, 1272, 20], [1191, 1316, 13], [1539, 1530, 18], [1252, 1041, 14], [1294, 1026, 13],
      [1310, 1066, 13], [1269, 1081, 13], [1218, 1128, 31], [1201, 652, 19], [1112, 672, 22], [1205, 646, 6], [147, 720, 104],
      [461, 726, 11], [1100, 1383, 30],
    ],
    stars: [[1390, 200, 48, 5], [1490, 342, 46, 15], [1530, 1450, 44, 15], [1570, 620, 50]],
    sparks: [[1420, 992, 40, 10], [725, 745, 45, 15]],
    hearts: [[100, 725, 34, -10], [185, 710, 34, -10]],
    drops: [[1132, 525, 20, -15], [1208, 540, 18, -15]],
    lines: [
      "M1083 42C1110 -5 1170 -10 1190 20C1210 60 1195 100 1205 138L1105 128M1108 140C1115 150 1135 148 1140 134M1165 30C1175 20 1185 35 1182 60C1178 85 1160 85 1158 70C1158 55 1160 40 1165 30Z",
      "M1258 0C1290 25 1330 0 1350 10C1400 30 1450 -10 1500 0M1260 35L1400 38L1540 -5C1560 -5 1560 15 1545 20L1400 60L1262 58C1252 50 1255 38 1260 35ZM1275 62C1260 80 1270 95 1290 90C1310 70 1320 95 1350 85C1370 70 1390 95 1410 85C1430 65 1460 80 1480 70C1500 50 1520 55 1540 45M1290 92C1285 120 1310 125 1340 122L1500 100C1530 95 1540 70 1538 50",
      "M1185 328C1190 320 1210 340 1230 333C1260 300 1350 290 1390 325C1415 360 1405 400 1370 415C1335 430 1340 450 1342 500C1340 540 1310 545 1290 530C1270 500 1230 475 1180 462C1155 445 1175 430 1190 400C1200 380 1180 350 1185 328Z",
      "M1110 280C1120 310 1135 350 1135 390C1130 405 1120 412 1108 414",
      "M1105 625C1140 612 1180 608 1205 608C1210 585 1235 570 1245 582C1260 595 1265 620 1262 635C1285 660 1275 720 1235 745C1180 775 1100 785 1065 735C1055 720 1055 710 1055 700M1150 680C1160 675 1175 680 1172 688C1165 695 1155 695 1150 680ZM1130 698C1140 715 1160 710 1165 695C1175 705 1195 705 1195 685M1228 688L1234 686M1240 680L1246 676M1085 712L1090 714M1098 712L1104 716",
      "M1278 700C1320 690 1360 700 1368 660C1375 630 1345 610 1345 600C1355 590 1385 600 1390 650C1390 690 1370 710 1385 750C1400 790 1405 830 1395 845C1370 860 1310 865 1305 845C1300 830 1320 835 1322 825C1325 800 1340 775 1352 795C1360 815 1330 820 1345 840M1138 775C1145 800 1170 820 1185 832C1195 850 1160 870 1162 885C1170 900 1190 895 1195 885C1190 860 1225 870 1222 850L1208 828M1195 885C1230 895 1260 890 1260 870C1265 840 1255 825 1252 808M1258 825C1290 825 1320 810 1335 790",
      "M1560 700L1490 706C1480 708 1478 715 1480 725L1490 820C1492 828 1498 830 1510 828L1560 824M1560 730L1515 736C1508 742 1512 750 1520 750L1560 746M1560 765L1520 770C1512 776 1516 782 1525 784L1560 780",
      "M1105 925C1150 930 1170 970 1220 985C1270 995 1330 960 1358 1010C1365 1080 1345 1180 1330 1230C1315 1280 1290 1285 1250 1268C1210 1250 1215 1210 1198 1185C1170 1160 1130 1155 1105 1142M1105 960L1125 965L1122 992L1142 998C1145 1015 1135 1028 1120 1030L1105 1028M1190 1015L1208 1012L1182 1070L1166 1068ZM1105 1065C1130 1075 1130 1105 1105 1112M1105 1170C1130 1170 1140 1190 1130 1205C1145 1220 1135 1240 1105 1238",
      "M1235 1360C1240 1330 1290 1325 1320 1320C1370 1300 1400 1250 1450 1238C1480 1240 1490 1280 1482 1330C1475 1380 1450 1430 1400 1440L1340 1460C1280 1470 1240 1440 1232 1410ZM1350 1440C1355 1380 1360 1360 1390 1355L1475 1348M1350 1395L1290 1395C1260 1400 1250 1420 1262 1430L1350 1430M1265 1460L1210 1568M1288 1465L1230 1568M1352 1448L1365 1568M1375 1448L1385 1568M1405 1440L1465 1545C1475 1552 1482 1545 1478 1535L1425 1435",
      "M1105 1458C1150 1445 1185 1480 1180 1520L1168 1568M1105 1530C1120 1490 1140 1490 1142 1510C1140 1525 1140 1540 1160 1568",
      "M1560 990C1540 1020 1545 1080 1560 1110M1510 1088C1520 1080 1530 1085 1535 1095L1560 1125M1510 1088C1505 1110 1530 1140 1560 1148M1560 420C1530 430 1525 490 1560 500M1560 370L1552 385M1560 140C1545 165 1548 195 1560 215M1530 255C1540 250 1555 255 1560 262M1530 258C1535 275 1550 280 1560 280",
      "M105 10C110 35 200 45 230 0M178 0L178 28M505 0C500 30 515 42 530 42C560 42 565 20 560 0M708 0L718 40M895 0L905 40M318 700L318 758M588 700L588 758M368 758L368 706L384 706L384 742L400 742L400 706L416 706L416 758M450 758L450 745L472 745L472 758M935 760C930 720 970 710 975 760M1005 755C1015 745 1030 750 1035 760",
    ],
  },
  {
    x: 0,
    y: 1850,
    dots: [
      [80, 28, 24], [21, 76, 13], [97, 107, 11], [24, 249, 22], [444, 272, 12], [499, 260, 17], [556, 265, 12], [748, 279, 17],
      [810, 266, 15], [398, 405, 17], [343, 467, 11], [429, 485, 18], [374, 515, 11], [493, 517, 11], [94, 615, 13],
      [0, 618, 18], [184, 610, 24], [413, 597, 11], [40, 1000, 34], [128, 1002, 11], [210, 990, 14], [298, 980, 12],
      [497, 1003, 12], [554, 988, 23], [631, 358, 56], [674, 328, 11], [779, 372, 57], [194, 235, 18], [262, 238, 17],
      [874, 540, 18], [990, 520, 40], [1412, 545, 12], [1533, 570, 10], [870, 610, 14],
    ],
    stars: [[325, 605, 44, -15], [1180, 610, 30]],
    sparks: [[350, 322, 50, 12]],
    hearts: [[72, 172, 37, -20]],
    ovals: [[252, 442, 42, 100, -10], [260, 442, 24, 80, -10], [250, 442, 14, 28, -10], [1157, 258, 78, 38]],
    lines: [
      "M62 295C80 255 130 240 150 278C180 275 200 300 195 325C180 365 110 390 60 380C30 370 25 330 50 322C45 310 50 300 62 295Z",
      "M210 372L100 432L55 450C30 455 25 490 42 510L60 515L108 510L250 528M98 435L108 510M88 515L102 560C108 572 122 570 122 558L112 512",
      "M455 340C455 325 485 315 500 328C540 420 620 500 740 540C790 540 810 550 805 575C795 610 770 605 740 598C600 580 480 450 455 360ZM515 330L730 238M785 540L810 430M840 330L850 238M680 460C690 435 710 440 720 460C740 445 770 455 785 475C780 500 750 500 735 488C720 500 700 500 690 485C695 470 690 465 680 460ZM766 342L768 400M742 375L800 372M748 395L790 352",
      "M335 992L362 968L420 968L385 1003ZM645 1003C650 970 700 960 710 975C740 965 770 985 765 1003M1020 968L1060 1003M1310 968C1300 980 1305 1003 1310 1003M1340 1003C1350 985 1500 970 1560 968M1140 540L1185 595C1200 600 1205 580 1195 560L1180 540M900 238L918 238L905 296M1035 238L1005 296M960 238C970 260 1000 265 1020 275M1290 238L1300 255L1345 238M1360 290L1450 262L1520 290M1450 262L1455 290M1260 540L1290 555L1300 540",
      "M75 905L90 920M115 930L120 950L125 935",
    ],
  },
  {
    x: 520,
    y: 1850,
    dots: [
      [1285, 71, 12], [1203, 110, 26], [1152, 144, 18], [1288, 144, 11], [1405, 131, 12], [1458, 68, 13], [1523, 80, 12],
      [1530, 168, 23], [1109, 249, 15], [1507, 360, 12], [1471, 410, 20], [1350, 243, 76], [1350, 243, 54], [1350, 243, 10],
      [1222, 288, 9], [1283, 290, 9], [62, 552, 13], [248, 565, 26], [307, 580, 11], [422, 560, 22], [504, 590, 14],
      [581, 582, 12], [866, 565, 17], [832, 606, 12], [1160, 656, 24], [1090, 935, 13], [1156, 919, 11], [1099, 700, 11],
      [69, 994, 11], [588, 1000, 22], [659, 990, 18], [796, 1003, 36], [796, 1003, 16], [1098, 990, 15], [1403, 985, 14],
      [580, 298, 58], [580, 298, 38], [805, 350, 120], [1475, 640, 24], [1555, 690, 12], [40, 296, 24], [660, 575, 8],
      [742, 565, 8], [1473, 930, 13],
    ],
    stars: [[1545, 268, 48, 10], [1245, 985, 44, 10]],
    sparks: [[1000, 982, 44, 5]],
    lines: [
      "M1205 190L1330 240C1300 262 1200 270 1180 268ZM1180 268L1172 296M1340 265L1330 296M1350 200L1350 232M1350 255L1350 288M1305 243L1338 243M1362 243L1395 243M1318 212L1342 236M1358 250L1382 275M1382 212L1358 236M1318 275L1342 250",
      "M90 238L105 296M110 238L125 296M300 238L340 262C320 290 250 270 200 296M340 262L500 238M330 238L345 262M780 296L782 255C800 280 860 275 880 262L870 296",
      "M1425 470C1460 450 1485 470 1482 485C1510 500 1490 545 1440 555C1390 570 1340 570 1330 545M1480 505C1470 500 1465 505 1460 510",
      "M950 545C960 570 970 590 990 605M1025 545L1035 625L1210 585C1220 570 1210 555 1210 545M1035 625L1110 560L1215 575M1060 560C1080 580 1100 580 1120 545M635 606C640 560 660 545 700 542C750 545 780 570 785 606M700 545L680 606M700 545L725 606M690 575L712 575",
      "M1440 605L1465 590L1490 595L1500 612L1525 620L1528 650L1515 665L1510 690L1480 695M1440 605L1445 620",
      "M380 968C390 985 400 1003 400 1003M410 968L435 1003M690 1003L710 968M880 968L890 1003M100 1003L130 985M300 968L280 1000M190 968C200 975 215 970 220 968M1450 1000L1530 965L1545 975L1490 1003M1560 985L1520 1003M1560 405C1530 430 1520 470 1560 500M1560 710C1545 740 1550 760 1560 770M1560 960C1540 980 1545 1000 1560 1003",
      "M1105 118C1120 90 1130 70 1165 50C1180 40 1160 20 1150 0M1130 0C1135 20 1150 50 1160 52M1215 0C1210 25 1220 35 1230 20L1245 0M1365 0C1370 35 1390 35 1385 0",
    ],
  },
];

function Wallpaper() {
  return (
    <svg
      aria-hidden="true"
      className="absolute inset-0 h-full w-full"
      viewBox="0 240 1040 1946"
      preserveAspectRatio="xMidYMin slice"
      fill="none"
      stroke="#8c8a78"
      strokeOpacity="0.18"
      strokeWidth="6"
      strokeLinejoin="round"
      strokeLinecap="round"
    >
      <defs>
        <linearGradient id="paper" x1="0" y1="0" x2="0" y2="1">
          <stop offset="0" stopColor="#e7eae4" />
          <stop offset="0.13" stopColor="#eeede8" />
          <stop offset="0.18" stopColor="#f0ebe6" />
          <stop offset="0.24" stopColor="#efe7dd" />
          <stop offset="0.65" stopColor="#efe7de" />
          <stop offset="0.8" stopColor="#efe5df" />
          <stop offset="1" stopColor="#eee3dd" />
        </linearGradient>
      </defs>
      <rect x="0" y="240" width="1040" height="1946" fill="url(#paper)" stroke="none" />
      {patches.map((p, i) => {
        const sy = p.tall ? 1 / 2.8 : 1 / 3;
        const squash = p.tall ? 0.933 : 1;
        return (
          <g key={i} transform={`translate(${p.x} ${p.y}) scale(${1 / 3} ${sy})`}>
            {p.dots.map(([x, y, r], k) => (
              <ellipse key={k} cx={x} cy={y} rx={r} ry={r * squash} />
            ))}
            {p.ovals?.map(([x, y, a, b, t], k) => (
              <ellipse key={k} rx={a} ry={b} transform={`translate(${x} ${y}) rotate(${t ?? 0})`} />
            ))}
            {p.stars?.map(([x, y, r, t], k) => (
              <path key={k} d={starPath(r)} transform={`translate(${x} ${y}) scale(1 ${squash}) rotate(${t ?? 0})`} />
            ))}
            {p.sparks?.map(([x, y, r, t], k) => (
              <path key={k} d={sparkPath(r)} transform={`translate(${x} ${y}) rotate(${t ?? 0})`} />
            ))}
            {p.hearts?.map(([x, y, r, t], k) => (
              <path key={k} d={heartPath(r)} transform={`translate(${x} ${y}) rotate(${t ?? 0})`} />
            ))}
            {p.drops?.map(([x, y, r, t], k) => (
              <path key={k} d={dropPath(r)} transform={`translate(${x} ${y}) rotate(${t ?? 0})`} />
            ))}
            {p.letters?.map(([s, x, y, size, t], k) => (
              <text key={k} fontSize={size} fontWeight="700" transform={`translate(${x} ${y}) rotate(${t})`}>
                {s}
              </text>
            ))}
            {p.lines.map((d, k) => (
              <path key={k} d={d} />
            ))}
          </g>
        );
      })}
    </svg>
  );
}

/* ------------------------------------------------------------------ */
/* Status bar                                                          */
/* ------------------------------------------------------------------ */

function Signal({ full }: { full?: boolean }) {
  return (
    <svg width="39" height="28" viewBox="0 0 39 28" fill="currentColor">
      <path d="M0 28v-2l8-5v7z" />
      <path d="M11 28v-9l5-3v12z" />
      <g opacity={full ? 1 : 0.3}>
        <path d="M18 28V15l5-3v16z" />
        <path d="M26 28V9l5-3v22z" />
        <path d="M34 28V4l5-4v28z" />
      </g>
    </svg>
  );
}

function StatusBar() {
  return (
    <div className="flex h-[92px] shrink-0 items-center bg-[#054d44] pt-[31px] pl-[51px] text-[#d5e5e1]">
      <time className="text-[33px] leading-10 font-semibold text-[#e3efec]">2:35 PM</time>
      <div className="ml-4 flex items-center gap-[14px]">
        <svg width="34" height="34" viewBox="0 0 34 34">
          <path d="M8 1l3 3 3-2 3 3 3-1 3 3 3-1 2 3 6-1-6 25-3-1-2-2-4 1-3-3-4 0-3-2-4 0-5-1z" fill="#e3efec" />
          <path d="M8 21l2-10m-1 3c2-4 6-4 5 0l-1 6m1-6c2-4 6-4 5 0l-1 6m5-9l-1 6c0 4 4 3 5 0l2-6m-2 6c-1 5-4 8-6 6" fill="none" stroke="#054d44" strokeWidth="2" />
        </svg>
        <svg width="34" height="34" viewBox="0 0 34 34" fill="none">
          <circle cx="17" cy="18" r="11.500" stroke="#e3efec" strokeWidth="8" />
          <circle cx="18" cy="17" r="16" stroke="#e3efec" strokeWidth="1" />
          <circle cx="16" cy="17" r="8" stroke="#054d44" strokeWidth="1" opacity=".6" />
        </svg>
        <svg width="34" height="34" viewBox="0 0 34 34" fill="currentColor">
          <rect x="1" y="1" width="32" height="32" rx="6" fill="none" stroke="currentColor" strokeWidth="1.500" />
          <rect x="8" y="8" width="11" height="3" rx="1" />
          <circle cx="24" cy="10" r="2.100" />
          <circle cx="17" cy="17" r="2.100" />
          <circle cx="24" cy="17" r="2.100" />
          <circle cx="9" cy="24" r="2.100" />
          <circle cx="17" cy="24" r="2.100" />
          <circle cx="24" cy="24" r="2.100" />
        </svg>
      </div>
      <svg className="mx-7" width="34" height="8" viewBox="0 0 34 8" fill="#e3efec">
        <circle cx="4" cy="4" r="3.200" />
        <circle cx="17" cy="4" r="3.200" />
        <circle cx="30" cy="4" r="3.200" />
      </svg>
      <svg width="22" height="34" viewBox="0 0 22 34" fill="none" stroke="currentColor" strokeWidth="2.500" strokeLinejoin="round" strokeLinecap="round">
        <path d="M2 10l17 14-9 8V2l9 8L2 24" />
      </svg>
      <svg className="ml-[14px]" width="34" height="34" viewBox="0 0 34 34" fill="none" stroke="currentColor" strokeWidth="2.800" strokeLinecap="round">
        <circle cx="17" cy="19" r="13" />
        <path d="M12 17l5 5 6-6M2 8q3-5 8-6M32 8q-3-5-8-6" />
      </svg>
      <svg className="ml-[13px]" width="32" height="28" viewBox="0 0 32 28">
        <rect width="32" height="28" rx="5" fill="currentColor" />
        <text x="4" y="13" fontSize="13" fontWeight="800" fill="#054d44">Vo</text>
        <text x="4" y="25" fontSize="13" fontWeight="800" fill="#054d44">LTE</text>
      </svg>
      <div className="ml-[6px] flex items-center gap-[13px]">
        <Signal />
        <Signal full />
        <div className="w-9 text-[16px] leading-4 font-semibold">
          <div>Vo</div>
          <div>WiFi</div>
        </div>
        <svg width="41" height="32" viewBox="0 0 41 32" fill="none" stroke="currentColor" strokeWidth="3.600">
          <path d="M1 11a28 28 0 0 1 38 0M6 17a21 21 0 0 1 28 0M11 22a13 13 0 0 1 18 0" />
          <path d="M16 26q4-3 8 0l-4 4z" fill="currentColor" stroke="none" />
          <path d="M34 22v9m0 0l-4-4M37 31v-9m0 0l4 4" strokeWidth="1.800" />
        </svg>
      </div>
      <div className="ml-[13px] flex items-center gap-0.5" role="img" aria-label="Battery 25 percent">
        <div className="relative flex h-[29px] w-[60px] items-center justify-center rounded-[9px] border-4 border-current">
          <span className="absolute left-[3px] h-4 w-3 rounded-[3px] bg-[#3d766d]" />
          <span className="relative text-[22px] leading-6 font-medium">25</span>
        </div>
        <span className="h-[10px] w-1 rounded-r bg-current" />
      </div>
    </div>
  );
}

/* ------------------------------------------------------------------ */
/* Header                                                              */
/* ------------------------------------------------------------------ */

function Avatar() {
  return (
    <svg width="92" height="92" viewBox="0 0 92 92" className="shrink-0 rounded-full" role="img" aria-label="Group picture">
      <defs>
        <clipPath id="round">
          <circle cx="46" cy="46" r="46" />
        </clipPath>
      </defs>
      <g clipPath="url(#round)">
        <rect width="92" height="92" fill="#fff" />
        <g fill="none" strokeWidth="9">
          <path d="M46 34C54 23 61 16 70 16A17 17 0 0 1 70 50C62 50 57 46 52 40" stroke="#1fc85c" />
          <path d="M52 40L38 23C33 18 29 16 22 16A17 17 0 0 0 22 50C30 50 35 47 40 41" stroke="#13263a" />
          <path d="M37 45L57 22" stroke="#1fc85c" />
        </g>
        <path d="M37 20v6l-6 3M6 24l6 3 4-3M6 43l6-2 3 5M54 18l6 1-1 5M85 26l-4 4-4-3M86 40l-6 1-1 5M60 52l-6-4 4-5" fill="none" stroke="#fff" strokeWidth="1" />
        <path d="M16 15h9M4 30v6M20 50h8M66 15h10M87 30v7M64 50h9M42 38l6-7" stroke="#08703f" strokeWidth="1.500" />
        <text x="14" y="36" fontSize="9" fontWeight="900" fill="#35c46c">Dev</text>
        <text x="60" y="36" fontSize="9" fontWeight="900" fill="#13263a">Ops</text>
        <text x="9" y="77" fontSize="7" fontWeight="600" fill="#333">vOps is a culture, not</text>
        <text x="15" y="85" fontSize="7" fontWeight="600" fill="#333">d.</text>
      </g>
      <circle cx="46" cy="46" r="45.500" fill="none" stroke="#1b3a35" strokeOpacity=".6" />
    </svg>
  );
}

function Header() {
  return (
    <header className="relative z-10 flex h-[148px] shrink-0 items-center bg-[#075e54] pl-5 text-white shadow-[0_2px_5px_rgba(0,0,0,0.25)]">
      <button type="button" aria-label="Back" className="shrink-0">
        <svg width="46" height="46" viewBox="0 0 46 46" fill="none" stroke="currentColor" strokeWidth="5">
          <path d="M44 23H6M24 4L5 23l19 19" />
        </svg>
      </button>
      <div className="ml-2">
        <Avatar />
      </div>
      <div className="ml-[22px] min-w-0 flex-1">
        <h1 className="truncate text-[48px] leading-[56px] font-medium">JMSTH_DevOps_26_8pm</h1>
        <p className="mt-[6px] truncate text-[35px] leading-10 text-[#e0f2ef]">Amarnath, Anita Jmsth26, Bharat Jms...</p>
      </div>
      <button type="button" aria-label="Group call" className="mr-[74px] shrink-0">
        <svg width="52" height="52" viewBox="0 0 52 52" fill="currentColor">
          <path d="M3 3h11c2 0 2 1 2 3 0 4 1 7 2 10 0 1 0 2-1 3l-6 6c4 7 9 13 17 17l6-6c1-1 2-1 3-1 3 1 7 2 10 2 2 0 3 0 3 2v10c0 2-1 2-3 2C22 51 1 29 1 5c0-1 0-2 2-2z" />
          <path d="M30 11h21M41 0v22" stroke="currentColor" strokeWidth="4.500" fill="none" />
        </svg>
      </button>
      <button type="button" aria-label="More options" className="mr-[49px] shrink-0">
        <svg width="20" height="44" viewBox="0 0 20 44" fill="currentColor">
          <circle cx="10" cy="6" r="5.500" />
          <circle cx="10" cy="22" r="5.500" />
          <circle cx="10" cy="38" r="5.500" />
        </svg>
      </button>
    </header>
  );
}

/* ------------------------------------------------------------------ */
/* Messages                                                            */
/* ------------------------------------------------------------------ */

const nameColor = {
  blue: "text-[#809fe6]",
  teal: "text-[#53b5b4]",
  brown: "text-[#b48a72]",
  green: "text-[#149a14]",
};

interface MessageProps {
  author?: string;
  color?: keyof typeof nameColor;
  quote?: { author: string; text: string };
  text: string;
  time: string;
}

function Message({ author, color = "teal", quote, text, time }: MessageProps) {
  return (
    <li
      className={`relative ml-[46px] w-fit max-w-[81%] shrink-0 rounded-[16px] bg-white shadow-[0_2px_2px_rgba(0,0,0,0.14)] ${
        author ? "mt-[21px] rounded-tl-none pt-3 pb-[14px]" : "mt-[6px] pt-[14px] pb-4"
      }`}
    >
      {author && (
        <svg className="absolute top-0 -left-[19px]" width="20" height="30" viewBox="0 0 20 30" fill="#fff" aria-hidden="true">
          <path d="M20 0H2C0 0-1 2 1 4l19 26z" />
        </svg>
      )}
      {author && <h2 className={`pr-[30px] pl-[22px] text-[38px] leading-[44px] font-medium ${nameColor[color]}`}>{author}</h2>}
      {quote && (
        <blockquote className="mx-[11px] mt-[14px] mb-3 flex min-h-[127px] overflow-hidden rounded-[7px] border border-l-0 border-[#ececec] bg-[#f7f7f7]">
          <span className="w-2 shrink-0 bg-[#53b5b4]" />
          <div className="flex flex-col justify-center py-[10px] pr-[34px] pl-[21px]">
            <cite className="mt-1 text-[38px] leading-[44px] font-medium text-[#53b5b4] not-italic">{quote.author}</cite>
            <p className="mt-[6px] text-[37px] leading-[45px] text-[#767676]">{quote.text}</p>
          </div>
        </blockquote>
      )}
      <p className={`pr-[18px] pl-[22px] text-[42px] leading-[50px] text-[#212121] ${author && !quote ? "mt-[15px]" : ""}`}>
        {text}
        <time className="float-right mt-[17px] -mb-[5px] ml-[42px] text-[32px] leading-[38px] text-[#9b9b9b]">{time}</time>
      </p>
    </li>
  );
}

function OwnMessage({ text, time }: { text: string; time: string }) {
  return (
    <li className="relative mt-[21px] mr-[46px] w-fit max-w-[81%] shrink-0 self-end rounded-[16px] rounded-tr-none bg-[#e1ffc7] pt-[14px] pb-4 shadow-[0_2px_2px_rgba(0,0,0,0.14)]">
      <svg className="absolute top-0 -right-[19px]" width="20" height="30" viewBox="0 0 20 30" fill="#e1ffc7" aria-hidden="true">
        <path d="M0 0h18c2 0 3 2 1 4L0 30z" />
      </svg>
      <p className="pr-8 pl-[22px] text-[42px] leading-[50px] text-[#1c2414]">
        {text}
        <span className="float-right mt-[17px] -mb-[5px] ml-[26px] flex items-center gap-3 text-[32px] leading-[38px] text-[#8ba37b]">
          <time>{time}</time>
          <svg width="30" height="38" viewBox="0 0 30 38" fill="none" stroke="currentColor" strokeWidth="3.500" role="img" aria-label="Sent">
            <path d="M1 20l10 9L28 6" />
          </svg>
        </span>
      </p>
    </li>
  );
}

function DayLabel({ children }: { children: React.ReactNode }) {
  return (
    <li className="mt-[25px] mb-[13px] shrink-0 self-center rounded-[16px] bg-[#d4eaf4] px-5 py-[17px] text-[34px] leading-[41px] text-[#54656f] shadow-[0_2px_2px_rgba(0,0,0,0.14)]">
      {children}
    </li>
  );
}

/* ------------------------------------------------------------------ */
/* Composer and system keys                                            */
/* ------------------------------------------------------------------ */

function Composer() {
  return (
    <form className="relative flex shrink-0 items-center gap-[13px] pr-[11px] pb-3 pl-[13px]" onSubmit={(e) => e.preventDefault()}>
      <div className="flex h-[119px] min-w-0 flex-1 items-center rounded-full bg-white pr-[37px] pl-7 text-[#8a8f94] shadow-[0_2px_2px_rgba(0,0,0,0.14)]">
        <button type="button" aria-label="Emoji" className="shrink-0">
          <svg width="58" height="58" viewBox="0 0 58 58" fill="none">
            <circle cx="29" cy="30" r="26.500" stroke="currentColor" strokeWidth="3.500" />
            <ellipse cx="21.500" cy="24" rx="3.800" ry="5" fill="currentColor" />
            <ellipse cx="37" cy="24" rx="3.800" ry="5" fill="currentColor" />
            <path d="M14 33q15 5 30 0c0 8-7 13-15 13s-15-5-15-13zM18 37q11 5 22 0-11 3-22 0z" fill="currentColor" fillRule="evenodd" />
            <path d="M18 37q11 3 22 0-11 6-22 0z" fill="#fff" stroke="#fff" />
          </svg>
        </button>
        <label className="relative ml-[29px] flex min-w-0 flex-1 items-center">
          <span className="absolute left-0 -ml-px h-[65px] w-[6px] bg-[#00897b]" />
          <input
            type="text"
            aria-label="Type a message"
            placeholder="Type a message"
            className="relative w-full min-w-0 bg-transparent pt-1 text-[48px] leading-[56px] text-[#212121] outline-none placeholder:text-[#a8a8a8] placeholder:opacity-100"
          />
        </label>
        <button type="button" aria-label="Attach" className="shrink-0">
          <svg width="56" height="56" viewBox="0 0 56 56" fill="none" stroke="currentColor" strokeWidth="4" strokeLinecap="square">
            <path d="M31 8l21 20c4 5 5 12 0 17-5 5-12 5-17 0L6 21c-4-4-5-9-1-13 4-4 9-4 13 0l22 21c3 3 3 6 1 8-2 2-5 2-8-1L18 20" transform="translate(-1 0)" />
          </svg>
        </button>
        <button type="button" aria-label="Camera" className="ml-[61px] shrink-0">
          <svg width="54" height="56" viewBox="0 0 54 56">
            <path d="M10 8h5l4-5q2-2 4-2h9q2 0 4 2l4 5h4q9 0 9 9v24q0 9-9 9H10q-9 0-9-9V17q0-9 9-9z" fill="currentColor" />
            <circle cx="27" cy="27" r="11" fill="currentColor" stroke="#fff" strokeWidth="4.500" />
          </svg>
        </button>
      </div>
      <button
        type="button"
        aria-label="Record voice message"
        className="flex size-[124px] shrink-0 items-center justify-center rounded-full bg-[#00897b] text-white shadow-[0_3px_5px_rgba(0,0,0,0.3)]"
      >
        <svg width="40" height="56" viewBox="0 0 40 56" fill="none" stroke="currentColor" strokeWidth="5.500" strokeLinecap="round">
          <rect x="12" y="1" width="16" height="33" rx="8" fill="currentColor" stroke="none" />
          <path d="M3 27c1 11 8 17 17 17s16-6 17-17M20 44v8" />
        </svg>
      </button>
    </form>
  );
}

function SystemKeys() {
  return (
    <nav aria-label="System" className="flex h-[125px] shrink-0 items-center justify-center gap-[164px] bg-black text-[#b3b3b3]">
      <button type="button" aria-label="Recent apps">
        <svg width="52" height="52" viewBox="0 0 52 52" fill="currentColor">
          <rect x="11" y="11" width="31" height="31" rx="1" />
        </svg>
      </button>
      <button type="button" aria-label="Home">
        <svg width="52" height="52" viewBox="0 0 52 52" fill="none">
          <circle cx="26" cy="26" r="22" stroke="currentColor" strokeWidth="3.500" />
          <circle cx="26" cy="26" r="16.500" fill="currentColor" />
        </svg>
      </button>
      <button type="button" aria-label="Back">
        <svg width="52" height="52" viewBox="0 0 52 52" fill="currentColor" stroke="currentColor" strokeWidth="2" strokeLinejoin="round">
          <path d="M38 10v33L9 26z" />
        </svg>
      </button>
    </nav>
  );
}

export default function App() {
  return (
    <div className="flex h-screen flex-col overflow-hidden bg-black font-[Roboto,sans-serif]">
      <StatusBar />
      <Header />
      <main className="relative flex min-h-0 flex-1 flex-col">
        <Wallpaper />
        <ol className="relative flex min-h-0 flex-1 flex-col justify-end overflow-hidden pb-5">
          <Message author="Nithin Shetty Jmsth26" color="brown" text="Do we have class today?" time="7:58 pm" />
          <Message author="Sagarika Jmsth26 Us" color="blue" text="No" time="7:58 pm" />
          <Message author="Sayantan Jmsth26" text="No" time="7:58 pm" />
          <Message text="From monday terraform he said." time="7:58 pm" />
          <Message author="Nithin Shetty Jmsth26" color="brown" text="Ok Thanks" time="7:58 pm" />
          <Message author="Raviteja Jmsth26" color="green" quote={{ author: "Sayantan Jmsth26", text: "No" }} text="Thanks bro" time="8:01 pm" />
          <DayLabel>TODAY</DayLabel>
          <Message
            author="Sayantan Jmsth26"
            text="Sir i have passed the aws solutions architect exam just now. Many thanks for your guidance."
            time="2:21 pm"
          />
          <Message
            author="Raviteja Jmsth26"
            color="green"
            quote={{
              author: "Sayantan Jmsth26",
              text: "Sir i have passed the aws solutions architect exam just now. Many thanks for your guidance.",
            }}
            text="Congratulations bro"
            time="2:34 pm"
          />
          <OwnMessage text="Congratulations sayantan" time="2:35 pm" />
        </ol>
        <Composer />
      </main>
      <SystemKeys />
    </div>
  );
}
